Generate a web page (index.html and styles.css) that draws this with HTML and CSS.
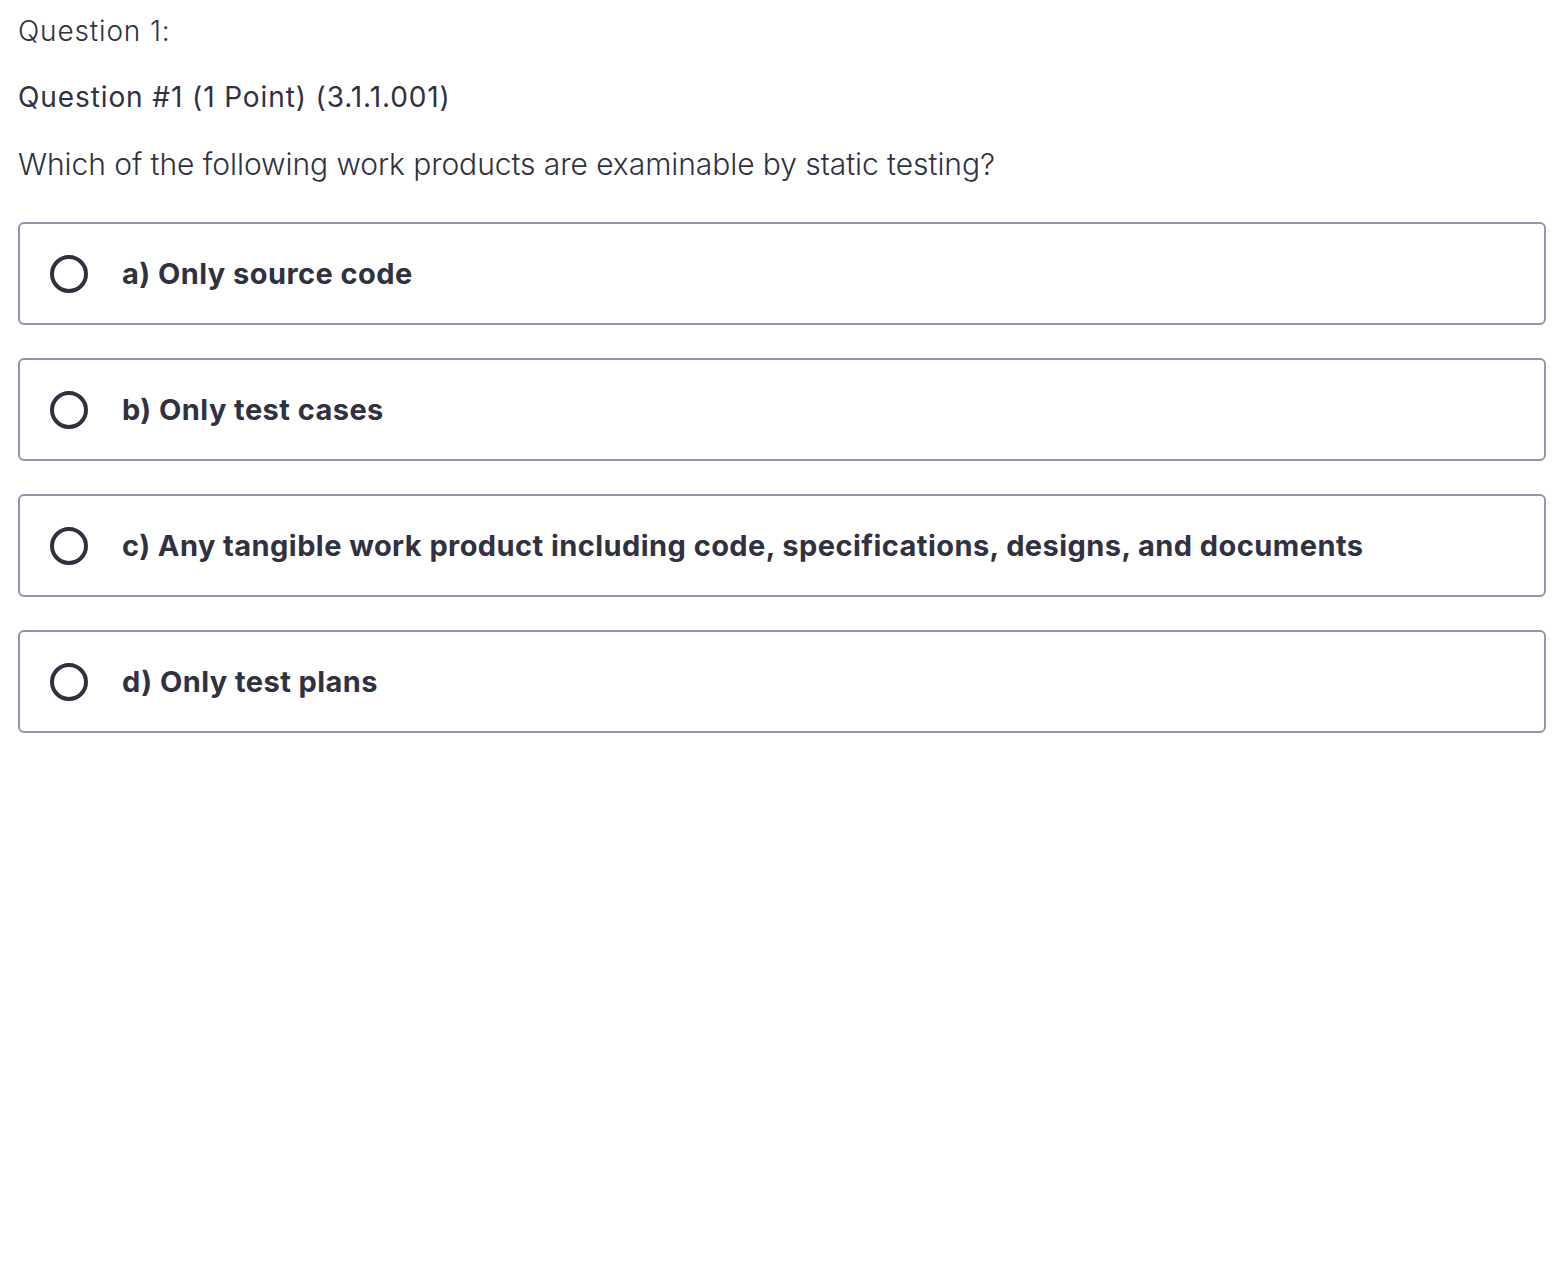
FILE: index.html
```html
<!DOCTYPE html>
<html>
<head>
<meta charset="utf-8">
<link rel="stylesheet" href="styles.css">
</head>
<body>
<div class="page">
  <div class="q-label">Question 1:</div>
  <div class="q-title">Question #1 (1 Point) (3.1.1.001)</div>
  <div class="q-text">Which of the following work products are examinable by static testing?</div>
  <div class="options">
    <label class="option"><span class="radio"></span><span class="opt-text">a) Only source code</span></label>
    <label class="option"><span class="radio"></span><span class="opt-text">b) Only test cases</span></label>
    <label class="option"><span class="radio"></span><span class="opt-text">c) Any tangible work product including code, specifications, designs, and documents</span></label>
    <label class="option"><span class="radio"></span><span class="opt-text">d) Only test plans</span></label>
  </div>
</div>
</body>
</html>
```
FILE: styles.css
```css
html, body {
  margin: 0;
  padding: 0;
  background: #ffffff;
}
body {
  font-family: Inter, "Noto Sans", sans-serif;
  color: #303141;
}
.page {
  padding: 12px 20px 0 18px;
}
.q-label {
  font-size: 28px;
  font-weight: 300;
  line-height: 38px;
  letter-spacing: 0.85px;
}
.q-title {
  margin-top: 28px;
  font-size: 28px;
  font-weight: 400;
  line-height: 38px;
  letter-spacing: 0.9px;
}
.q-text {
  margin-top: 28px;
  font-size: 30px;
  font-weight: 300;
  line-height: 40px;
  letter-spacing: -0.06px;
}
.options {
  margin-top: 38px;
  display: flex;
  flex-direction: column;
  gap: 33px;
}
.option {
  display: flex;
  align-items: center;
  height: 103px;
  box-sizing: border-box;
  border: 2px solid #9194ac;
  border-radius: 6px;
  padding-left: 30px;
}
.radio {
  width: 38px;
  height: 38px;
  box-sizing: border-box;
  border: 4px solid #303141;
  border-radius: 50%;
  flex: none;
}
.opt-text {
  margin-left: 34px;
  font-size: 29px;
  font-weight: 700;
  letter-spacing: 0.44px;
}
```
